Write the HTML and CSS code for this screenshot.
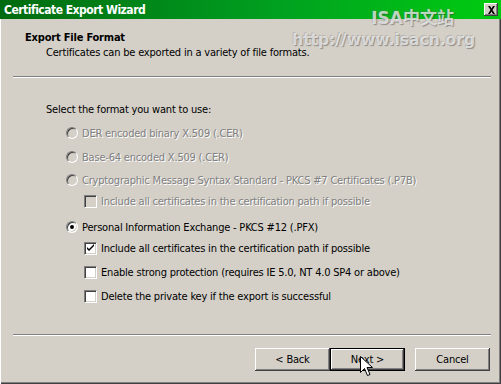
FILE: index.html
```html
<!DOCTYPE html>
<html lang="en">
<head>
    <meta charset="UTF-8">
    <title>Certificate Export Wizard</title>
    <link rel="stylesheet" href="styles.css">
</head>
<body>
    <div class="window">
        <div class="titlebar">
            <span class="title">Certificate Export Wizard</span>
            <span class="close">
                <svg width="9" height="8" viewBox="0 0 9 8"><path d="M1 0h2l1.5 2.5L6 0h2L5.5 4 8 8H6L4.5 5.5 3 8H1l2.5-4z" fill="#000"/></svg>
            </span>
        </div>

        <div class="frame">
            <section class="head">
                <div class="head-title">Export File Format</div>
                <div class="head-desc">Certificates can be exported in a variety of file formats.</div>
            </section>
            <div class="sep"></div>

            <section class="content">
                <p class="prompt">Select the format you want to use:</p>
                <div class="opt disabled">
                    <span class="radio"></span>DER encoded binary X.509 (.CER)
                </div>
                <div class="opt disabled">
                    <span class="radio"></span>Base-64 encoded X.509 (.CER)
                </div>
                <div class="opt disabled opt-tight">
                    <span class="radio"></span>Cryptographic Message Syntax Standard - PKCS #7 Certificates (.P7B)
                </div>
                <div class="opt sub disabled opt-sub">
                    <span class="check"></span>Include all certificates in the certification path if possible
                </div>
                <div class="opt opt-group">
                    <span class="radio on"></span>Personal Information Exchange - PKCS #12 (.PFX)
                </div>
                <div class="opt sub opt-sub">
                    <span class="check">
                        <svg width="9" height="9" viewBox="0 0 9 9"><path d="M1 3l2 2 5-5v2L3 7 1 5z" fill="#000"/></svg>
                    </span>Include all certificates in the certification path if possible
                </div>
                <div class="opt sub">
                    <span class="check"></span>Enable strong protection (requires IE 5.0, NT 4.0 SP4 or above)
                </div>
                <div class="opt sub">
                    <span class="check"></span>Delete the private key if the export is successful
                </div>
            </section>

            <div class="sep"></div>
            <div class="buttons">
                <button type="button" class="btn">&lt; Back</button>
                <button type="button" class="btn default">Next &gt;</button>
                <button type="button" class="btn cancel">Cancel</button>
            </div>
        </div>

        <div class="watermark">
            <div class="wm-1">ISA中文站</div>
            <div class="wm-2">http://www.isacn.org</div>
        </div>

        <svg class="pointer" width="13" height="21" viewBox="0 0 13 21">
            <path d="M0.5 0.5v16l4-4 3 7 2.5-1-3-7h5.5z" fill="#fff" stroke="#000"/>
        </svg>
    </div>
</body>
</html>
```

FILE: styles.css
```css
body {
    margin: 0;
    padding: 0;
    background: #d4d0c8;
}
.window {
    position: relative;
    width: 501px;
    height: 384px;
    background: #d4d0c8;
    font-family: "DejaVu Sans Condensed", "DejaVu Sans", sans-serif;
    font-stretch: condensed;
    font-size: 11px;
    letter-spacing: -0.2px;
    color: #000;
    overflow: hidden;
    display: flex;
    flex-direction: column;
}
.titlebar {
    height: 19px;
    display: flex;
    align-items: center;
    justify-content: space-between;
    padding: 0 3px 0 4px;
    background: linear-gradient(to right, #006a10, #00a020 55%, #00cc10);
}
.title {
    color: #fff;
    font-weight: bold;
    font-size: 12px;
    letter-spacing: -0.5px;
}
.close {
    width: 14px;
    height: 13px;
    display: flex;
    align-items: center;
    justify-content: center;
    background: #d4d0c8;
    box-shadow: inset -1px -1px #404040, inset 1px 1px #fff, inset -2px -2px #808080;
}
.frame {
    flex: 1;
    display: flex;
    flex-direction: column;
    border-left: 1px solid #fff;
    box-shadow: inset -1px -1px #404040, inset -2px -2px #808080, inset 1px 0 #d4d0c8;
    padding: 0 10px 0 12px;
}
.head {
    padding: 12px 0 0 12px;
    height: 45px;
}
.head-title {
    font-weight: bold;
    line-height: 13px;
}
.head-desc {
    margin-top: 2px;
    padding-left: 21px;
    line-height: 13px;
}
.sep {
    height: 0;
    border-top: 1px solid #808080;
    border-bottom: 1px solid #fff;
}
.content {
    flex: 1;
    padding: 25px 0 0 33px;
}
.prompt {
    margin: 0 0 9px;
    line-height: 13px;
}
.opt {
    display: flex;
    align-items: center;
    height: 16px;
    margin-top: 8px;
    padding-left: 20px;
    white-space: nowrap;
}
.prompt + .opt {
    margin-top: 0;
}
.opt-tight {
    margin-top: 7px;
}
.opt-sub {
    margin-top: 5px;
}
.opt-group {
    margin-top: 10px;
}
.opt.sub {
    padding-left: 38px;
}
.opt.disabled {
    color: #808080;
    text-shadow: 1px 1px #fff;
}
.radio {
    width: 12px;
    height: 12px;
    border-radius: 50%;
    margin-right: 4px;
    box-sizing: border-box;
    background: #fff;
    border: 1px solid;
    border-color: #808080 #fff #fff #808080;
    box-shadow: inset 1px 1px #404040, inset -1px -1px #d4d0c8;
    position: relative;
}
.disabled .radio {
    background: #d4d0c8;
}
.radio.on::after {
    content: "";
    position: absolute;
    left: 3px;
    top: 3px;
    width: 4px;
    height: 4px;
    border-radius: 50%;
    background: #000;
}
.check {
    width: 13px;
    height: 13px;
    margin-right: 4px;
    box-sizing: border-box;
    background: #fff;
    border: 1px solid;
    border-color: #808080 #fff #fff #808080;
    box-shadow: inset 1px 1px #404040, inset -1px -1px #d4d0c8;
    display: flex;
    align-items: center;
    justify-content: center;
}
.disabled .check {
    background: #d4d0c8;
}
.buttons {
    height: 47px;
    display: flex;
    align-items: center;
    justify-content: flex-end;
    padding-right: 1px;
    padding-bottom: 1px;
}
.btn {
    width: 75px;
    height: 23px;
    padding: 0;
    font-family: inherit;
    font-stretch: condensed;
    font-size: 11px;
    letter-spacing: -0.2px;
    color: #000;
    background: #d4d0c8;
    border: none;
    box-shadow: inset -1px -1px #404040, inset 1px 1px #fff, inset -2px -2px #808080, inset 2px 2px #d4d0c8;
}
.btn.default {
    box-shadow: inset 0 0 0 1px #000, inset -2px -2px #404040, inset 2px 2px #fff, inset -3px -3px #808080;
}
.btn.cancel {
    margin-left: 10px;
}
.watermark {
    position: absolute;
    top: 7px;
    right: 26px;
    text-align: right;
    color: rgba(240, 240, 240, 0.75);
    text-shadow: 1px 1px 1px rgba(60, 60, 60, 0.45), -1px -1px 0 rgba(120, 120, 120, 0.3);
    font-family: "DejaVu Sans", "Noto Sans CJK SC", sans-serif;
    font-stretch: normal;
    font-weight: bold;
    letter-spacing: 0;
    line-height: 22px;
}
.wm-1 {
    font-size: 17px;
    margin-right: 21px;
}
.wm-2 {
    font-size: 15.5px;
}
.pointer {
    position: absolute;
    left: 360px;
    top: 356px;
}
```
